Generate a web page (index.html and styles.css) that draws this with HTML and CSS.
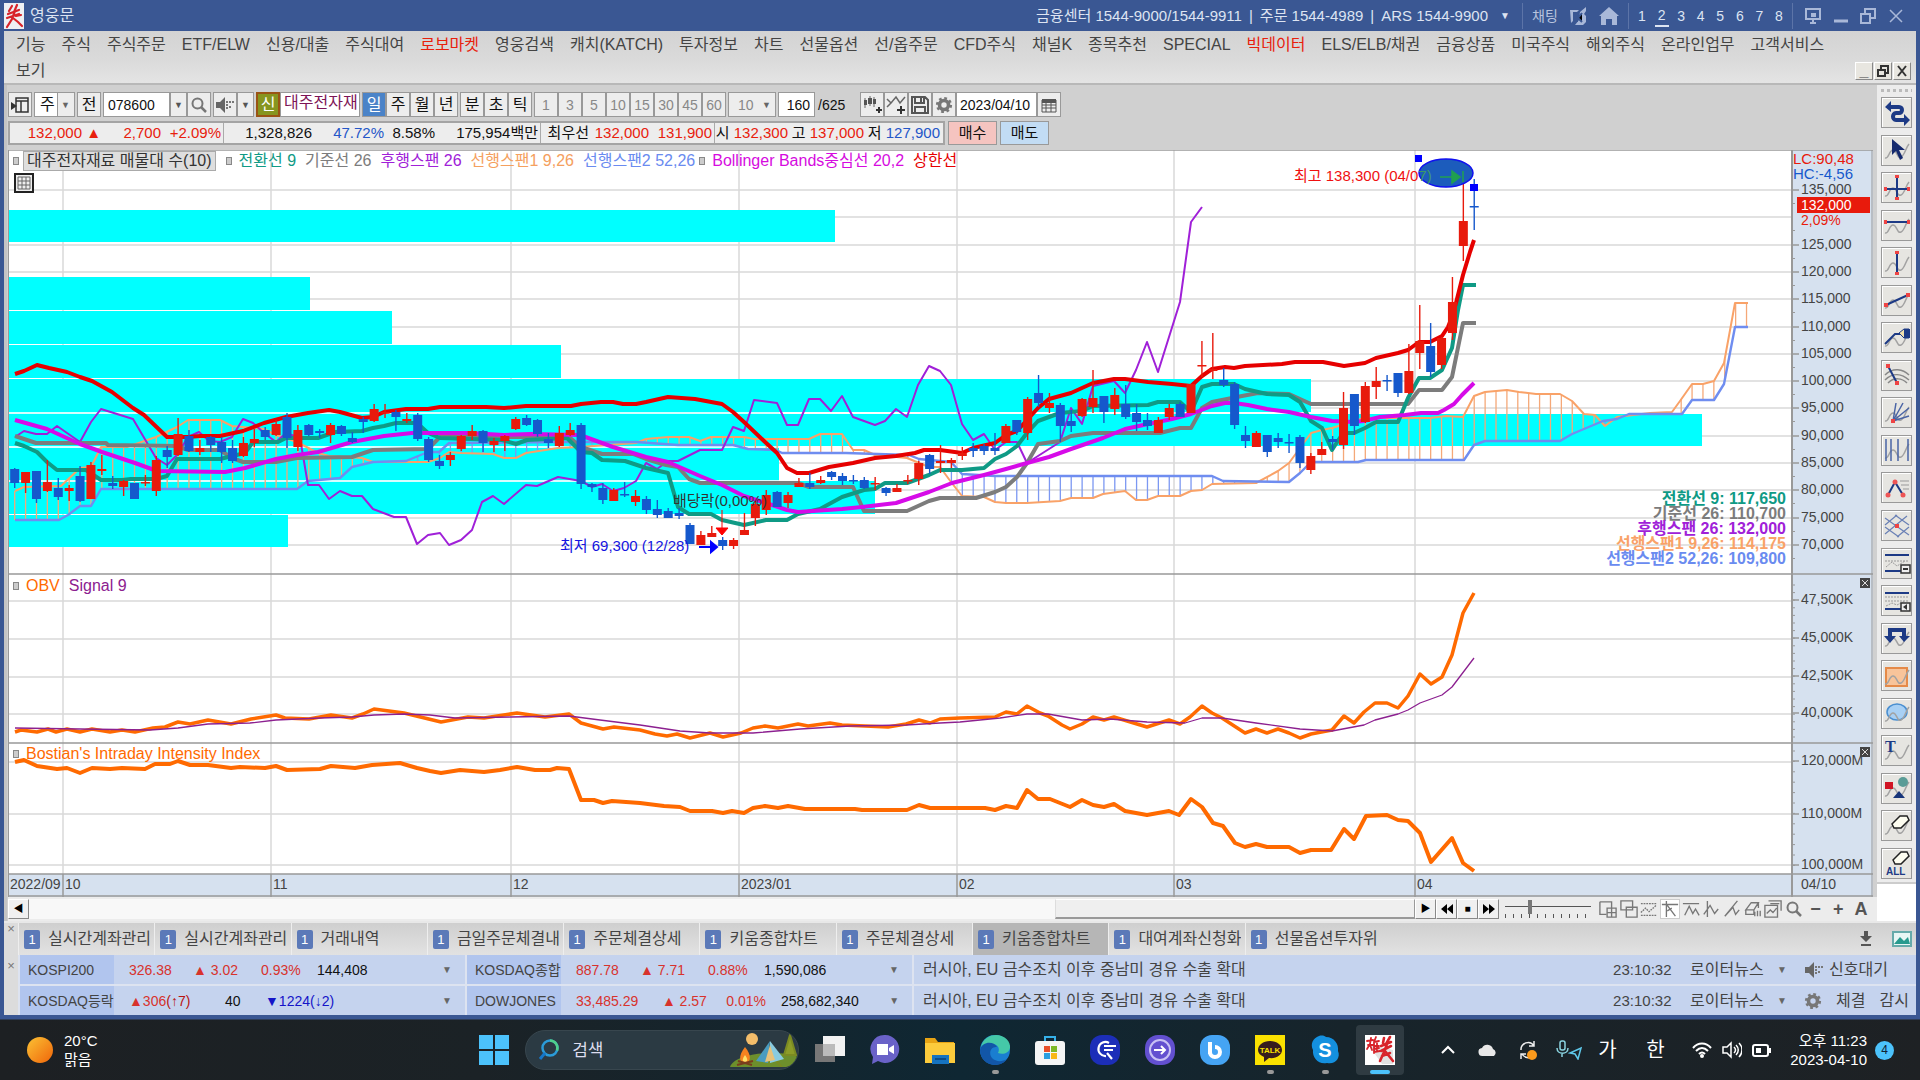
FILE: index.html
```html
<!DOCTYPE html>
<html lang="ko">
<head>
<meta charset="utf-8">
<title>영웅문</title>
<link rel="stylesheet" href="styles.css">
</head>
<body>
<svg class="defs" aria-hidden="true">
  <symbol id="wave" viewBox="0 0 28 28"><path d="M2 22c4 1 4-8 8-8s4 9 8 7 4-8 8-13" fill="none" stroke="#a2a2a2" stroke-width="1.5"/></symbol>
  <symbol id="speaker" viewBox="0 0 20 16"><path d="M1 5h4l5-5v16l-5-5H1z" fill="#666"/><path d="M12 4v9M15 4v3M15 9v3M18 4v2" stroke="#777" stroke-width="2" stroke-dasharray="2 1"/></symbol>
  <symbol id="gear" viewBox="0 0 20 20"><circle cx="10" cy="10" r="5" fill="none" stroke="#777" stroke-width="4"/><circle cx="10" cy="10" r="7.5" fill="none" stroke="#777" stroke-width="3" stroke-dasharray="3 2.9"/></symbol>
  <symbol id="lens" viewBox="0 0 18 18"><circle cx="7.500" cy="7.500" r="5" fill="none" stroke="#777" stroke-width="2"/><path d="M11 11l5 5" stroke="#777" stroke-width="2.500"/></symbol>
</svg>

<div class="window">
  <header class="titlebar">
    <svg class="logo" viewBox="0 0 20 26"><rect width="20" height="26" fill="#eef0f4"/><path d="M8 3L5 8M13 2l-3 7M4 11l11-4M3 15l12-4M11 8l-3 8-5 8M9 15l5 4 4 4M12 13l5-1" fill="none" stroke="#d8232a" stroke-width="2.200" stroke-linecap="round"/></svg>
    <h1>영웅문</h1>
    <div class="phones"><span>금융센터 1544-9000/1544-9911</span><span>|</span><span>주문 1544-4989</span><span>|</span><span>ARS 1544-9900</span></div>
    <button class="drop" aria-label="전화번호">▼</button>
    <div class="tgroup links">
      <button>채팅</button>
      <button aria-label="키움"><svg width="20" height="20" viewBox="0 0 20 20"><path d="M2 4h9l-2 2H5v9l-2 2zM12 6l6-5v4l-2 3 2 2v6l-3 3H7l4-5z" fill="#a9b8d8"/><path d="M9 8v8M14 7l-4 5 4 4" stroke="#3a5793" stroke-width="2"/></svg></button>
      <button aria-label="홈"><svg width="20" height="20" viewBox="0 0 20 20"><path d="M0 10L10 1l10 9h-2v9h-5v-6H7v6H2v-9z" fill="#a9b8d8"/></svg></button>
    </div>
    <nav class="tgroup nums" aria-label="화면"><button>1</button><button class="on">2</button><button>3</button><button>4</button><button>5</button><button>6</button><button>7</button><button>8</button></nav>
    <div class="tgroup wins">
      <button aria-label="모니터"><svg width="16" height="16" viewBox="0 0 16 16"><path d="M1 1h14v10H1zM5 15h6M8 11v4" fill="none" stroke="#a9b8d8" stroke-width="2"/><path d="M6 5h5v4H6z" fill="#a9b8d8"/></svg></button>
      <button aria-label="최소화"><svg width="16" height="16" viewBox="0 0 16 16"><path d="M1 13h14" stroke="#a9b8d8" stroke-width="3"/></svg></button>
      <button aria-label="복원"><svg width="16" height="16" viewBox="0 0 16 16"><path d="M1 6h9v9H1zM5 6V1h10v9h-5" fill="none" stroke="#a9b8d8" stroke-width="2"/></svg></button>
      <button aria-label="닫기"><svg width="16" height="16" viewBox="0 0 16 16"><path d="M2 2l12 12M14 2L2 14" stroke="#a9b8d8" stroke-width="1.500"/></svg></button>
    </div>
  </header>

  <nav class="menu">
    <a href="#">기능</a><a href="#">주식</a><a href="#">주식주문</a><a href="#">ETF/ELW</a><a href="#">신용/대출</a><a href="#">주식대여</a><a href="#" class="hot">로보마켓</a><a href="#">영웅검색</a><a href="#">캐치(KATCH)</a><a href="#">투자정보</a><a href="#">차트</a><a href="#">선물옵션</a><a href="#">선/옵주문</a><a href="#">CFD주식</a><a href="#">채널K</a><a href="#">종목추천</a><a href="#">SPECIAL</a><a href="#" class="hot">빅데이터</a><a href="#">ELS/ELB/채권</a><a href="#">금융상품</a><a href="#">미국주식</a><a href="#">해외주식</a><a href="#">온라인업무</a><a href="#">고객서비스</a>
  </nav>
  <div class="menu second">
    <a href="#">보기</a>
    <div class="childwins"><button aria-label="최소화">_</button><button aria-label="복원"><svg width="12" height="12" viewBox="0 0 12 12"><path d="M1 5h7v6H1zM4 4V1h7v7H8" fill="none" stroke="#333" stroke-width="2"/></svg></button><button aria-label="닫기"><svg width="12" height="12" viewBox="0 0 12 12"><path d="M2 1l8 10M10 1L2 11" stroke="#333" stroke-width="2"/></svg></button></div>
  </div>

  <div class="workspace">
    <main class="left">
      <div class="toolbar">
        <button class="sq" aria-label="패널"><svg width="18" height="16" viewBox="0 0 18 16"><path d="M5 1h12v14H5zM5 4h12M10 4v11" fill="none" stroke="#333" stroke-width="1.500"/><path d="M0 5l6 4-6 4z" fill="#333"/></svg></button>
        <span class="pick"><select aria-label="종류"><option>주</option></select></span>
        <button class="sq">전</button>
        <span class="joined code"><input type="text" value="078600" aria-label="종목코드"><button class="thin" aria-label="목록">▼</button><button class="sq" aria-label="검색"><svg width="18" height="18"><use href="#lens"/></svg></button></span>
        <span class="joined"><button class="sq" aria-label="소리"><svg width="20" height="16"><use href="#speaker"/></svg></button><button class="thin" aria-label="소리 설정">▼</button></span>
        <span class="joined"><button class="sq credit">신</button><span class="stock">대주전자재</span></span>
        <span class="joined"><button class="sq on">일</button><button class="sq">주</button><button class="sq">월</button><button class="sq">년</button></span>
        <span class="joined"><button class="sq">분</button><button class="sq">초</button><button class="sq">틱</button></span>
        <span class="joined mins"><button class="sq">1</button><button class="sq">3</button><button class="sq">5</button><button class="sq">10</button><button class="sq">15</button><button class="sq">30</button><button class="sq">45</button><button class="sq">60</button></span>
        <span class="pick wide"><select aria-label="주기"><option>10</option></select></span>
        <span class="joined count"><input type="text" value="160" aria-label="봉 개수"><span>/625</span></span>
        <span class="joined">
          <button class="sq" aria-label="차트 유형"><svg width="20" height="20" viewBox="0 0 20 20"><path d="M3 3v10M8 1v10M12 2v10" stroke="#666"/><path d="M2 5h3v5H2zM6 3h4v6H6zM11 4h3v5h-3z" fill="#555"/><path d="M14 15h6M17 12v6" stroke="#333" stroke-width="2"/></svg></button>
          <button class="sq" aria-label="지표 추가"><svg width="20" height="20" viewBox="0 0 20 20"><path d="M1 4l4 4 5-6 4 6 5-6M1 12l5-5" fill="none" stroke="#666" stroke-width="1.500"/><path d="M11 15h8M15 11v8" stroke="#333" stroke-width="2"/></svg></button>
          <button class="sq" aria-label="저장"><svg width="18" height="18" viewBox="0 0 18 18"><path d="M1 1h13l3 3v13H1zM4 1v6h9V1M4 17v-6h10v6M10 2v4" fill="none" stroke="#555" stroke-width="2"/></svg></button>
          <button class="sq" aria-label="설정"><svg width="18" height="18"><use href="#gear"/></svg></button>
          <input class="date" type="text" value="2023/04/10" aria-label="날짜"><button class="sq" aria-label="달력"><svg width="16" height="16" viewBox="0 0 16 16"><path d="M1 3h14v12H1zM1 8h14M1 11h14M5 6v9M10 6v9" fill="none" stroke="#555"/><path d="M1 2h14v4H1z" fill="#555"/></svg></button>
        </span>
      </div>

      <div class="quotes">
        <div class="quote">
          <span class="up">132,000 ▲</span><span class="up">2,700</span><span class="up cut">+2.09%</span><span>1,328,826</span><span class="down">47.72%</span><span>8.58%</span><span class="cut">175,954백만</span><span>최우선</span><span class="up">132,000</span><span class="up cut">131,900</span><span>시 <b class="up">132,300</b></span><span>고 <b class="up">137,000</b></span><span>저 <b class="down">127,900</b></span>
        </div>
        <button class="buy">매수</button><button class="sell">매도</button>
      </div>

      <section class="chart" aria-label="대주전자재료 일봉 차트">
        <svg id="plot" viewBox="8 150 1865 747"></svg>
        <div class="legend main">
          <i></i><span class="boxed">대주전자재료 매물대 수(10)</span><i></i><span class="c-green">전환선 9</span><span class="c-grey">기준선 26</span><span class="c-purple">후행스팬 26</span><span class="c-sand">선행스팬1 9,26</span><span class="c-blue">선행스팬2 52,26</span><i></i><span class="c-mag">Bollinger Bands중심선 20,2</span><span class="c-red">상한선</span>
        </div>
        <button class="gridbtn" aria-label="표"><svg width="14" height="14" viewBox="0 0 14 14"><path d="M1 1h12v12H1zM1 5h12M1 9h12M5 1v12M9 1v12" fill="none" stroke="#666"/></svg></button>
        <div class="legend obv"><i></i><span class="c-orange">OBV</span><span class="c-sig">Signal 9</span></div>
        <div class="legend bii"><i></i><span class="c-orange">Bostian's Intraday Intensity Index</span></div>
      </section>

      <div class="scroll">
        <button aria-label="왼쪽">◀</button>
        <div class="track"><div class="thumb"></div></div>
        <button aria-label="오른쪽">▶</button><button aria-label="뒤로"><svg width="12" height="10"><path d="M6 0v10L0 5zM12 0v10L6 5z"/></svg></button><button aria-label="정지">■</button><button aria-label="앞으로"><svg width="12" height="10"><path d="M0 0v10l6-5zM6 0v10l6-5z"/></svg></button>
        <input type="range" min="0" max="100" value="28" aria-label="배율">
        <div class="minis">
          <svg viewBox="0 0 20 20"><path d="M1 2h13v7M1 2v14h7M9 9h10v10H9zM9 14h10M14 9v10"/></svg>
          <svg viewBox="0 0 20 20"><path d="M1 1h13v10H1zM7 8h12v11H7z"/></svg>
          <svg viewBox="0 0 20 20"><path d="M1 4h18M1 17h18M1 14l5-5 4 4 8-7" stroke-dasharray="2 1"/></svg>
          <svg class="on" viewBox="0 0 20 20"><path d="M1 5h18M6 1v18M7 6l9 12M7 12l5-3"/></svg>
          <svg viewBox="0 0 20 20"><path d="M1 4h18M3 17l5-10 4 8 3-5 4 7"/></svg>
          <svg viewBox="0 0 20 20"><path d="M6 1v18M2 16l7-10 5 9 4-5"/></svg>
          <svg viewBox="0 0 20 20"><path d="M2 18L16 1M3 17l8-9 3 8 4-5"/></svg>
          <svg viewBox="0 0 20 20"><path d="M2 11l6-8h8l-5 8zM2 11v5h9v-5M16 3v6M12 18v-5M15 12v6M18 12v6"/></svg>
          <svg viewBox="0 0 20 20"><path d="M5 1h14v11M1 6h14v13H1zM3 15l4-4 3 3 4-5M7 4h10"/></svg>
          <svg viewBox="0 0 18 18"><use href="#lens"/></svg>
          <b>−</b><b>+</b><b>A</b>
        </div>
      </div>
    </main>

    <aside class="side" aria-label="작도 도구">
      <div class="grip"></div>
      <div class="tools">
        <button aria-label="전환"><svg viewBox="0 0 28 28"><path d="M24 21H13c-4 0-4-7 0-7h3c4 0 4-6 0-6H6" fill="none" stroke="#1d3a85" stroke-width="4"/><path d="M8 2v11L2 8zM21 15v12l6-6z" fill="#1d3a85"/></svg></button>
        <button aria-label="선택"><svg viewBox="0 0 28 28"><use href="#wave"/><path d="M9 3v16l4-4 4 9 3-2-4-8h6z" fill="#152a6e"/></svg></button>
        <button aria-label="십자선"><svg viewBox="0 0 28 28"><use href="#wave"/><path d="M2 15h24M14 3v22" stroke="#1d3a85" stroke-width="2"/><path d="M1 13h3v4H1zM24 13h3v4h-3zM12 1h4v3h-4zM12 23h4v3h-4z" fill="#e44"/></svg></button>
        <button aria-label="수평선"><svg viewBox="0 0 28 28"><use href="#wave"/><path d="M2 11h24" stroke="#1d3a85" stroke-width="2"/><path d="M1 9h3v4H1zM24 9h3v4h-3z" fill="#e44"/></svg></button>
        <button aria-label="수직선"><svg viewBox="0 0 28 28"><use href="#wave"/><path d="M14 4v20" stroke="#1d3a85" stroke-width="2"/><path d="M12 2h4v3h-4zM12 23h4v3h-4z" fill="#e44"/></svg></button>
        <button aria-label="추세선"><svg viewBox="0 0 28 28"><use href="#wave"/><path d="M3 19L25 9" stroke="#1d3a85" stroke-width="2"/><path d="M1 17h4v4H1zM23 7h4v4h-4z" fill="#e44"/></svg></button>
        <button aria-label="자유선"><svg viewBox="0 0 28 28"><use href="#wave"/><path d="M2 20l10-10h6" fill="none" stroke="#1d3a85" stroke-width="2"/><path d="M16 9l5-4h5v9h-5z" fill="#f0dfae" stroke="#1d3a85"/><path d="M21 5h6v9h-6z" fill="#1d3a85"/></svg></button>
        <button aria-label="부채호"><svg viewBox="0 0 28 28"><path d="M2 14c8-8 18-6 24 0M2 19c8-8 17-6 24 0M5 22c6-6 14-5 19 0" fill="none" stroke="#888" stroke-width="1.500"/><path d="M5 5l9 17" stroke="#1d3a85" stroke-width="2"/><path d="M3 3h4v4H3zM12 20h4v4h-4z" fill="#e44"/></svg></button>
        <button aria-label="각도선"><svg viewBox="0 0 28 28"><use href="#wave"/><path d="M10 22L13 4M10 22L20 4M10 22L26 9M10 22l16-5" stroke="#4a64a5" stroke-width="1.500"/><path d="M8 20h4v4H8z" fill="#e44"/></svg></button>
        <button aria-label="시간대"><svg viewBox="0 0 28 28"><use href="#wave"/><path d="M3 3v22M8 3v22M15 3v22M25 3v22" stroke="#4a64a5" stroke-width="1.500"/></svg></button>
        <button aria-label="패턴"><svg viewBox="0 0 28 28"><path d="M5 21l7-13 8 13" fill="none" stroke="#1d3a85" stroke-width="2"/><path d="M17 7h9M18 11h8M20 15h6" stroke="#999"/><circle cx="5" cy="21" r="2.500" fill="#e55"/><circle cx="12" cy="8" r="2.500" fill="#e55"/><circle cx="20" cy="21" r="2.500" fill="#e55"/></svg></button>
        <button aria-label="격자"><svg viewBox="0 0 28 28"><path d="M2 6l24 17M2 15l14 10M12 3l14 10M2 22L24 4M2 13L14 3M14 25l12-10" stroke="#6a80b5" stroke-width="1.200"/><path d="M12 12h4v4h-4z" fill="#e44"/></svg></button>
        <button aria-label="채널"><svg viewBox="0 0 28 28"><path d="M2 6h24M2 22h24" stroke="#1d3a85" stroke-width="2"/><path d="M2 12h24M3 18l6-5 5 4 8-5" stroke="#999" fill="none" stroke-dasharray="2 1"/><path d="M18 16h9v8h-9z" fill="#eee" stroke="#333" stroke-width="1.500"/><path d="M20 20h5" stroke="#333" stroke-width="2"/></svg></button>
        <button aria-label="채널 이동"><svg viewBox="0 0 28 28"><path d="M2 6h24M2 22h24" stroke="#1d3a85" stroke-width="2"/><path d="M2 10h24M2 14h24M3 19l6-3 5 2 8-4" stroke="#999" fill="none" stroke-dasharray="2 1"/><path d="M18 16h9v8h-9z" fill="#eee" stroke="#333" stroke-width="1.500"/><path d="M24 17v6l-4-3z" fill="#333"/></svg></button>
        <button aria-label="되돌림"><svg viewBox="0 0 28 28"><use href="#wave"/><path d="M7 14V6h14v8" fill="none" stroke="#1d3a85" stroke-width="4"/><path d="M1 12h12l-6 7zM16 12h11l-6 6z" fill="#1d3a85"/></svg></button>
        <button aria-label="사각형"><svg viewBox="0 0 28 28"><path d="M3 6h21v18H3z" fill="#f8c49a" stroke="#e58a48" stroke-width="2"/><use href="#wave"/></svg></button>
        <button aria-label="타원"><svg viewBox="0 0 28 28"><ellipse cx="14" cy="13" rx="10" ry="8" fill="#a8d0f4" stroke="#4a8fd0" stroke-width="1.500"/><use href="#wave"/></svg></button>
        <button aria-label="글자"><svg viewBox="0 0 28 28"><use href="#wave"/><text x="2" y="15" font-family="Liberation Serif, serif" font-weight="700" font-size="16" fill="#1d3a85">T</text></svg></button>
        <button aria-label="도형"><svg viewBox="0 0 28 28"><use href="#wave"/><path d="M2 8h8v7H2z" fill="#d11525"/><ellipse cx="20" cy="8" rx="5" ry="5" fill="#5a9c97"/><path d="M10 24l6-7 6 7z" fill="#17357a"/></svg></button>
        <button aria-label="지우기"><svg viewBox="0 0 28 28"><use href="#wave"/><path d="M9 12l8-8h7l2 4-8 8h-7z" fill="#fdfdf0" stroke="#222" stroke-width="1.500"/></svg></button>
        <button aria-label="모두 지우기"><svg viewBox="0 0 28 28"><path d="M10 11l8-8h6l2 4-8 8h-6z" fill="#fdfdf0" stroke="#222" stroke-width="1.500"/><text x="3" y="26" font-family="Liberation Sans, sans-serif" font-weight="700" font-size="10" fill="#1d3a85">ALL</text></svg></button>
      </div>
    </aside>
  </div>

  <div class="dock">
    <div class="handle">×</div>
    <nav class="tabs">
      <button><em>1</em><span>실시간계좌관리</span></button><button><em>1</em><span>실시간계좌관리</span></button><button><em>1</em><span>거래내역</span></button><button><em>1</em><span>금일주문체결내</span></button><button><em>1</em><span>주문체결상세</span></button><button><em>1</em><span>키움종합차트</span></button><button><em>1</em><span>주문체결상세</span></button><button class="on"><em>1</em><span>키움종합차트</span></button><button><em>1</em><span>대여계좌신청화</span></button><button><em>1</em><span>선물옵션투자위</span></button>
    </nav>
    <svg class="dl" width="12" height="16" viewBox="0 0 12 16"><path d="M4 0h4v5h4l-6 6-6-6h4zM1 13h10v2H1z" fill="#555"/></svg>
    <svg width="20" height="16" viewBox="0 0 20 16"><path d="M1 1h18v14H1z" fill="#e8f6f4" stroke="#6aa" stroke-width="2"/><path d="M2 13l6-7 4 4 4-4 2 7z" fill="#289a8e"/></svg>
  </div>
  <div class="tick">
    <div class="handle">×</div>
    <div class="rows">
      <div class="row">
        <div class="name">KOSPI200</div><div class="vals"><span class="v1 up2">326.38</span><span class="v2 up2">▲ 3.02</span><span class="v3 up2">0.93%</span><span class="v4">144,408</span><button aria-label="지수 선택">▼</button></div>
        <div class="name">KOSDAQ종합</div><div class="vals"><span class="v1 up2">887.78</span><span class="v2 up2">▲ 7.71</span><span class="v3 up2">0.88%</span><span class="v4">1,590,086</span><button aria-label="지수 선택">▼</button></div>
        <div class="news"><a href="#">러시아, EU 금수조치 이후 중남미 경유 수출 확대</a><time>23:10:32</time><span>로이터뉴스</span><button aria-label="뉴스 선택">▼</button></div>
        <div class="end"><svg width="20" height="16"><use href="#speaker"/></svg><button>신호대기</button></div>
      </div>
      <div class="row">
        <div class="name">KOSDAQ등락</div><div class="vals"><span class="w1 up2">▲306<b class="dk">(↑7)</b></span><span class="w2">40</span><span class="w3">▼1224(↓2)</span><button aria-label="지수 선택">▼</button></div>
        <div class="name">DOWJONES</div><div class="vals"><span class="v1 up2">33,485.29</span><span class="v2 up2 far">▲ 2.57</span><span class="v3 up2">0.01%</span><span class="v4">258,682,340</span><button aria-label="지수 선택">▼</button></div>
        <div class="news"><a href="#">러시아, EU 금수조치 이후 중남미 경유 수출 확대</a><time>23:10:32</time><span>로이터뉴스</span><button aria-label="뉴스 선택">▼</button></div>
        <div class="end two"><svg width="18" height="18"><use href="#gear"/></svg><button>체결</button><button>감시</button></div>
      </div>
    </div>
  </div>
</div>

<footer class="taskbar">
  <div class="weather"><svg width="26" height="26" viewBox="0 0 26 26"><defs><linearGradient id="sun" x1="0" y1="0" x2="1" y2="1"><stop offset="0" stop-color="#fbc234"/><stop offset="1" stop-color="#f0650a"/></linearGradient></defs><circle cx="13" cy="13" r="13" fill="url(#sun)"/></svg><p>20°C<br>맑음</p></div>
  <div class="apps">
    <button class="app win" aria-label="시작"><svg viewBox="0 0 30 30"><path d="M0 0h14v14H0zM16 0h14v14H16zM0 16h14v14H0zM16 16h14v14H16z" fill="#4cc2fb"/></svg></button>
    <label class="search"><svg width="22" height="22" viewBox="0 0 22 22"><circle cx="12" cy="9" r="7.500" fill="none" stroke="#2b9bd8" stroke-width="2.500"/><path d="M12 1.500a7.500 7.500 0 0 1 7 10" fill="none" stroke="#4fd08c" stroke-width="2.500"/><path d="M7 14l-5 6" stroke="#1677c8" stroke-width="3"/></svg><input type="text" placeholder="검색" aria-label="검색"><svg width="68" height="34" viewBox="0 0 68 34"><path d="M0 34c4-14 50-18 68-10-3 6-6 9-12 10z" fill="#6d8f2c"/><path d="M42 24l10 10M60 2l-6 20h12z" stroke="#7b8a22" fill="#8d9c28" stroke-width="2"/><circle cx="22" cy="6" r="6" fill="#f4bd6a"/><path d="M40 8L26 28l12 2z" fill="#4a9cc0"/><path d="M40 8l14 18-14 4z" fill="#89cbe0"/><path d="M40 12l-5 17 10-2z" fill="#e8c27a"/><path d="M15 14c7 8 6 16 0 16s-7-7 0-16z" fill="#f58220"/><path d="M15 22c3 4 3 7 0 7s-3-3 0-7z" fill="#fde06a"/><path d="M7 32l16-4M8 28l14 4" stroke="#7a3d1c" stroke-width="2"/></svg></label>
    <button class="app" aria-label="작업 보기"><svg viewBox="0 0 32 32"><path d="M1 10h20v18H1z" fill="#777"/><path d="M9 2h22v20H9z" fill="#f2f2f2"/><path d="M9 10h12v12H9z" fill="#bbb"/></svg></button>
    <button class="app" aria-label="채팅"><svg viewBox="0 0 32 32"><path d="M16 1a14 14 0 1 1-7 26l-6 3 1-7A14 14 0 0 1 16 1z" fill="#6a62c8"/><path d="M8 10h11v11H8zM20 14l5-3v9l-5-3z" fill="#fff"/></svg></button>
    <button class="app" aria-label="탐색기"><svg viewBox="0 0 32 32"><path d="M1 4h10l3 4h16v8H1z" fill="#e8a414"/><path d="M1 9h30v20H1z" fill="#fccb3c"/><path d="M8 21h17v9H8z" fill="#1673c0"/><path d="M11 25h11" stroke="#0b4c88" stroke-width="2"/></svg></button>
    <button class="app run" aria-label="Edge"><svg viewBox="0 0 32 32"><circle cx="16" cy="16" r="15" fill="#1a7ed0"/><path d="M2 13C4 4 11 1 17 1c9 0 15 7 14 13-1 5-7 7-12 5 4-8-6-13-17-6z" fill="#45c8a8"/><path d="M1 16c2-9 14-9 17-3-6-1-9 6-5 11 4 4 10 4 15 1-8 11-27 6-27-9z" fill="#1256a8"/></svg></button>
    <button class="app" aria-label="스토어"><svg viewBox="0 0 32 32"><path d="M11 8V3h10v5" fill="none" stroke="#35b0e8" stroke-width="2"/><rect x="1" y="7" width="30" height="24" rx="3" fill="#f5f5f5"/><path d="M10 12h6v6h-6z" fill="#e8502a"/><path d="M17 12h6v6h-6z" fill="#7db928"/><path d="M10 19h6v6h-6z" fill="#2b9fe0"/><path d="M17 19h6v6h-6z" fill="#f8b818"/></svg></button>
    <button class="app" aria-label="검색 도구"><svg viewBox="0 0 32 32"><rect x="1" y="1" width="30" height="30" rx="12" fill="#1c2eb8"/><path d="M20 9a7 7 0 1 0-3 13M15 12h12M15 16h9M18 19l5 6" fill="none" stroke="#fff" stroke-width="2.200"/></svg></button>
    <button class="app" aria-label="이동"><svg viewBox="0 0 32 32"><rect x="1" y="1" width="30" height="30" rx="13" fill="#6350d0"/><circle cx="16" cy="16" r="10" fill="none" stroke="#c9c2f4" stroke-width="2"/><path d="M10 16h11M17 12l4 4-4 4" fill="none" stroke="#fff" stroke-width="2"/></svg></button>
    <button class="app" aria-label="브라우저"><svg viewBox="0 0 32 32"><rect x="1" y="1" width="30" height="30" rx="12" fill="#45a4f4"/><path d="M11 8v12M11 18a5 5 0 1 0 5-5" fill="none" stroke="#fff" stroke-width="4"/></svg></button>
    <button class="app run" aria-label="카카오톡"><svg viewBox="0 0 32 32"><path d="M1 1h30v30H1z" fill="#fae100"/><path d="M16 7c7 0 12 4 12 9s-6 9-13 8l-5 4v-5c-4-2-6-4-6-7 0-5 5-9 12-9z" fill="#371d1e"/><text x="16" y="19" text-anchor="middle" font-family="Liberation Sans, sans-serif" font-weight="700" font-size="8" fill="#fae100">TALK</text></svg></button>
    <button class="app run" aria-label="스카이프"><svg viewBox="0 0 32 32"><path d="M10 2c3-1 6 0 7 1 8 0 13 7 12 14 3 7-3 14-11 12C10 31 3 24 4 16 1 10 4 4 10 2z" fill="#1490df"/><text x="16" y="23" text-anchor="middle" font-family="Liberation Sans, sans-serif" font-weight="700" font-size="20" fill="#fff">S</text></svg></button>
    <button class="app run active" aria-label="영웅문"><svg viewBox="0 0 32 32"><path d="M1 1h30v30H1z" fill="#fff"/><path d="M4 10l25 6v14H18z" fill="#e2e2e2"/><g fill="none" stroke="#d8232a" stroke-linecap="round"><path d="M3 7l6-1M7 4l-1 6-3 5M4 11h5M6 11l2 5M12 3l-2 5v11M10 8l5-1M10 12h5M10 15l5-1M10 18l6-1M13 8v9" stroke-width="1.800"/><path d="M20 4l-1 5M26 3l-4 7M17 12l10-4M17 17l10-5M23 10l-3 8-4 9M21 17l4 5 4 5M18 22l8-3" stroke-width="2.600"/></g></svg></button>
  </div>
  <div class="tray">
    <svg viewBox="0 0 20 20"><path d="M4 13l6-6 6 6" fill="none" stroke="#fff" stroke-width="2"/></svg>
    <svg viewBox="0 0 20 20"><path d="M5 16a4 4 0 0 1-1-8 6 6 0 0 1 11 1 4 4 0 0 1 1 7z" fill="#e8e8e8"/></svg>
    <svg viewBox="0 0 20 20"><path d="M3 10a7 7 0 0 1 13-4M16 1v5h-5M13 17a7 7 0 0 1-9-3M3 19v-5h5" fill="none" stroke="#eee" stroke-width="1.500"/><circle cx="14" cy="15" r="5" fill="#fb9a1c"/></svg>
    <svg class="mic" viewBox="0 0 26 20"><rect x="4" y="1" width="5" height="9" rx="2" fill="none" stroke="#8ad4e0" stroke-width="1.500"/><path d="M1 8c0 7 11 7 11 0M6 13v4" fill="none" stroke="#8ad4e0" stroke-width="1.500"/><path d="M25 8l-3 11-3-5-5-1z" fill="none" stroke="#5ec8ea" stroke-width="1.500"/></svg>
    <span>가</span><span class="han">한</span>
    <div class="net"><svg viewBox="0 0 20 20"><path d="M1 8c5-6 13-6 18 0M4 11c4-4 8-4 12 0M7 14c2-2 4-2 6 0" fill="none" stroke="#fff" stroke-width="2"/><circle cx="10" cy="16" r="2" fill="#fff"/></svg><svg viewBox="0 0 20 20"><path d="M1 7h4l4-4v14l-4-4H1zM12 7c2 2 2 4 0 6M14 5c3 3 3 7 0 10M17 3c4 4 4 10 0 14" fill="none" stroke="#fff" stroke-width="1.500"/></svg><svg viewBox="0 0 20 20"><rect x="1" y="5" width="15" height="11" rx="2" fill="none" stroke="#fff" stroke-width="2"/><path d="M4 8h5v5H4zM17 8h2v5h-2z" fill="#fff"/></svg></div>
    <p>오후 11:23<br>2023-04-10</p><em>4</em>
  </div>
</footer>
<script src="chart.js"></script>
</body>
</html>
```
FILE: styles.css
```css
* { box-sizing: border-box; }
body { margin: 0; min-height: 100vh; display: flex; flex-direction: column; background: #1c2024; font: 16px/20px "Liberation Sans", "Noto Sans CJK KR", sans-serif; color: #444; }
button, input, select { font: inherit; color: inherit; margin: 0; padding: 0; border: 0; background: none; border-radius: 0; }
a { color: inherit; text-decoration: none; }
b, em { font-weight: 400; font-style: normal; }
p { margin: 0; }
svg { flex: none; display: block; }
.defs { position: absolute; width: 0; height: 0; }
.window { background: #3a5793; padding: 0 4px 4px; display: flex; flex-direction: column; }

.titlebar { height: 31px; display: flex; align-items: center; color: #dde4f2; font-size: 15px; white-space: nowrap; }
.logo { width: 20px; height: 26px; margin-right: 6px; }
.titlebar h1 { font-size: 16px; font-weight: 400; margin: 0 auto 0 0; }
.drop { font-size: 10px; width: 34px; }
.phones { display: flex; gap: 7px; }
.tgroup { display: flex; align-items: center; height: 26px; border-left: 1px solid #5c74a8; }
.tgroup button { display: flex; justify-content: center; }
.links { width: 106px; padding: 0 9px; justify-content: space-between; font-size: 14px; color: #b8c4de; }
.nums { width: 164px; padding: 0 6px; justify-content: space-between; font-size: 14px; }
.nums button { width: 14px; }
.nums .on { border-bottom: 2px solid #dde4f2; }
.wins { width: 124px; padding: 0 12px; justify-content: space-between; }

.menu { display: flex; align-items: center; gap: 16px; height: 28px; padding: 0 12px; background: linear-gradient(#d3d3d3, #dadada); white-space: nowrap; }
.menu.second { height: 26px; padding-right: 5px; background: linear-gradient(#dadada, #e4e4e4); border-bottom: 2px solid #b8b8b8; justify-content: space-between; }
.hot { color: #e8200c; }
.childwins { display: flex; gap: 1px; }
.childwins button { width: 18px; height: 18px; background: #e8e6e0; border: 1px solid #888; border-top-color: #fff; border-left-color: #fff; display: flex; align-items: center; justify-content: center; font-weight: 700; line-height: 10px; }

.workspace { display: flex; background: #fff; }
.left { flex: 1; min-width: 0; background: #d0d0d0; border-left: 3px solid #c4c4c4; padding: 0 4px 0 1px; }
.toolbar { display: flex; align-items: center; gap: 2px; padding-top: 6px; height: 33px; color: #111; }
.sq, .thin, .pick, .toolbar input, .stock { height: 25px; border: 1px solid #999; background: #ededed; }
.sq { width: 24px; display: flex; align-items: center; justify-content: center; overflow: hidden; flex: none; line-height: 22px; }
.thin { width: 17px; font-size: 9px; color: #555; }
.joined { display: flex; align-items: center; }
.pick { position: relative; width: 41px; }
.pick select { appearance: none; width: 100%; height: 100%; padding-left: 5px; background: linear-gradient(90deg, #fff 22px, #999 22px, #999 23px, #ededed 23px); }
.pick::after { content: "▼"; position: absolute; right: 4px; top: 2px; font-size: 9px; color: #666; pointer-events: none; }
.pick.wide { width: 48px; font-size: 14px; color: #888; }
.pick.wide select { padding-left: 9px; background: #ededed; }
.toolbar input { background: #fff; font-size: 14px; padding: 0 4px; }
.code input { width: 67px; }
.sq.credit { background: #87951f; border: 2px solid #9a5414; color: #fff; }
.stock { width: 80px; background: #fff; color: #7d1456; white-space: nowrap; overflow: hidden; padding-left: 3px; }
.sq.on { background: #4a83c8; color: #fff; }
.mins { font-size: 14px; color: #888; }
.count input { width: 37px; text-align: right; }
.count { font-size: 14px; gap: 3px; width: 80px; }
.toolbar .date { width: 81px; padding: 0 3px; }

.quotes { display: flex; gap: 3px; padding: 3px 0 5px; height: 32px; font-size: 15px; color: #111; }
.quote { width: 937px; border: 2px solid #a4a4a4; background: #ededed; display: grid; grid-template-columns: 91px 60px 63px 88px 72px 51px 106px 48px 60px 66px 73px 76px 76px; text-align: right; line-height: 20px; white-space: nowrap; }
.cut { border-right: 1px solid #aaa; padding-right: 2px; }
.up { color: #e8200c; }
.down { color: #2456c8; }
.buy, .sell { width: 49px; border: 1px solid #999; background: #f5c4c0; }
.sell { background: #c2dcf4; }

.chart { position: relative; background: #fff; }
.chart > svg { width: 100%; height: auto; }
.legend { position: absolute; left: 5px; display: flex; align-items: center; gap: 9px; line-height: 20px; white-space: nowrap; }
.legend i { width: 6px; height: 8px; border: 1px solid #888; background: #ccc; margin-right: -2px; }
.legend .c-blue + i { margin-left: -5px; }
.legend .boxed { background: #dedede; outline: 1px solid #aaa; margin: 0 2px 0 -2px; padding: 0 3px; line-height: 18px; color: #333; }
.legend.main { top: 1px; }
.legend.obv { top: 57%; }
.legend.bii { top: 79%; margin-top: 4px; }
.gridbtn { position: absolute; left: 6px; top: 23px; width: 20px; height: 20px; border: 2px solid #222; background: #eee; display: flex; align-items: center; justify-content: center; }
.c-green { color: #0f9a85; } .c-grey { color: #7c7c7c; } .c-purple { color: #a020d8; } .c-sand { color: #f5a05e; } .c-blue { color: #6a8bf0; } .c-mag { color: #d60be0; } .c-red { color: #e60000; } .c-orange { color: #ff6a00; } .c-sig { color: #8c2090; }

.scroll { display: flex; align-items: center; height: 24px; background: #ececec; margin-right: -4px; padding-right: 4px; }
.scroll button { width: 21px; height: 20px; border: 1px solid #888; border-top-color: #fff; border-left-color: #fff; background: #f0f0f0; font-size: 10px; color: #000; display: flex; align-items: center; justify-content: center; line-height: 10px; }
.track { flex: 1; display: flex; justify-content: flex-end; background: #f8f8f8; height: 20px; }
.thumb { width: 26%; background: #efefef; border: 1px solid #999; border-top-color: #fff; border-left-color: #ddd; border-bottom-width: 2px; }
.scroll input { appearance: none; width: 86px; height: 20px; margin: 0 8px 0 6px; background: linear-gradient(#555, #555) 0 7px / 100% 1px no-repeat, repeating-linear-gradient(90deg, #555 0 1px, transparent 1px 8px) 0 15px / 100% 4px no-repeat; }
.scroll input::-webkit-slider-thumb { appearance: none; width: 4px; height: 14px; background: #777; margin-top: -4px; }
.minis { display: flex; align-items: center; gap: 2px; padding-right: 2px; width: 274px; justify-content: space-between; }
.minis svg { width: 18px; height: 18px; fill: none; stroke: #777; stroke-width: 1.5; }
.minis .on { background: #fff; outline: 1px solid #ccc; }
.minis b { font-weight: 700; font-size: 18px; color: #555; width: 20px; text-align: center; }

.side { width: 39px; display: flex; flex-direction: column; background: #ececec; margin-bottom: 37px; border-bottom: 2px solid #ccc; }
.grip { height: 3px; margin: 4px 4px 0; background: repeating-linear-gradient(90deg, #bbb 0 3px, transparent 3px 6px); }
.tools { flex: 1; display: grid; grid-auto-rows: 1fr; align-items: center; padding: 2px 4px 0; }
.tools button { width: 31px; height: 31px; border: 1px solid #999; box-shadow: inset 1px 1px #fff; background: #e6e5e1; display: flex; align-items: center; justify-content: center; }
.tools svg { width: 28px; height: 28px; }

.dock { display: flex; align-items: center; height: 34px; background: linear-gradient(#cfcfcf, #e2e2e2); border-top: 2px solid #e8e8e8; padding-right: 4px; gap: 20px; }
.dock .dl { margin-left: auto; }
.handle { width: 14px; align-self: stretch; background: #dcdcdc; color: #777; font-size: 13px; line-height: 12px; text-align: center; flex: none; }
.dock .handle { margin-right: -20px; }
.tabs { display: flex; flex: 1; max-width: 1363px; align-self: stretch; }
.tabs button { flex: 1; min-width: 0; display: flex; align-items: center; gap: 8px; padding-left: 5px; border-left: 1px solid #eee; white-space: nowrap; overflow: hidden; }
.tabs .on { background: #b6b6b6; }
.tabs em { width: 16px; height: 19px; background: #5b79b8; border-radius: 2px; color: #fff; font-size: 13px; line-height: 19px; text-align: center; flex: none; }
.tabs span { overflow: hidden; }

.tick { display: flex; background: #c5d3ee; }
.tick .handle { padding-top: 5px; }
.rows { flex: 1; min-width: 0; font-size: 15px; line-height: 20px; }
.row { display: flex; align-items: stretch; height: 29px; white-space: nowrap; }
.row + .row { border-top: 2px solid #dde3f0; height: 31px; }
.row > div { display: flex; align-items: center; }
.row > .name { width: 96px; padding-left: 8px; background: #b1c5ee; border-left: 2px solid #dde3f0; font-size: 14px; }
.vals { width: 351px; padding: 0 12px 0 15px; color: #111; font-size: 14px; }
.vals button, .news button { font-size: 10px; color: #666; }
.vals button { margin-left: auto; width: 12px; }
.v1 { width: 64px; } .v2 { width: 68px; } .v3 { width: 56px; } .v4 { width: 110px; }
.v1:has(+ .far) { width: 88px; } .far { width: 66px; }
.w1 { width: 96px; } .w2 { width: 40px; } .w3 { color: #1414c8; }
.up2 { color: #d8322c; } .dk { color: #b81410; }
.news { flex: 1; border-left: 2px solid #dde3f0; padding-left: 9px; }
.news a { margin-right: auto; font-size: 16px; }
.news time { width: 77px; }
.news span { width: 87px; font-size: 16px; }
.end { width: 129px; padding-left: 17px; gap: 5px; font-size: 16px; }
.end.two { gap: 14px; }

.taskbar { flex: 1; min-height: 58px; display: flex; align-items: center; justify-content: space-between; background: linear-gradient(90deg, #1d2023 0, #1b2226 25%, #0f2733 50%, #17242b 70%, #1e2124 100%); color: #fff; font-size: 15px; line-height: 19px; border-top: 1px solid #2e3d58; }
.weather { display: flex; align-items: center; gap: 11px; padding-left: 27px; width: 436px; }
.apps { display: flex; align-items: center; gap: 7px; }
.app { width: 48px; height: 50px; border-radius: 4px; position: relative; display: flex; align-items: center; justify-content: center; }
.app svg { width: 32px; height: 32px; }
.app.win svg { width: 30px; height: 30px; }
.run::after { content: ""; position: absolute; bottom: 1px; width: 7px; height: 4px; border-radius: 2px; background: #999; }
.active { background: #2f3b42; }
.active::after { width: 20px; background: #4cc2fb; }
.search { display: flex; align-items: center; width: 274px; height: 40px; border-radius: 20px; background: #2b3a43; border: 1px solid #38464e; padding-left: 12px; gap: 12px; overflow: hidden; }
.search input { flex: 1; min-width: 0; font-size: 17px; }
.search input::placeholder { color: #dde; opacity: 1; }
.tray { display: flex; align-items: center; gap: 20px; padding-right: 26px; }
.tray svg { width: 20px; height: 20px; }
.tray .mic { width: 26px; margin: 0 -4px 0 -2px; }
.tray span { font-size: 20px; width: 20px; }
.tray .han { margin-left: 8px; }
.net { display: flex; gap: 10px; margin-left: 6px; margin-right: -2px; }
.tray p { text-align: right; white-space: nowrap; }
.tray em { width: 19px; height: 19px; border-radius: 10px; background: #4cc2fb; color: #123; font-size: 12px; text-align: center; margin-left: -12px; }

#plot text { font-size: 14px; fill: #444; }
#plot .note { font-size: 15px; }
#plot .big { font-size: 16px; font-weight: 700; text-anchor: end; }
#plot polyline { fill: none; stroke-linejoin: round; }
```
FILE: chart.js
```js
const svg = document.getElementById('plot');
const NS = 'http://www.w3.org/2000/svg';
function add(tag, attrs, text, parent = svg) {
  const el = document.createElementNS(NS, tag);
  for (const k in attrs) el.setAttribute(k, attrs[k]);
  if (text) el.textContent = text;
  parent.appendChild(el);
  return el;
}
const line = (x1, y1, x2, y2, c, w = 1) => add('path', { d: `M${x1} ${y1}L${x2} ${y2}`, stroke: c, 'stroke-width': w });
const rect = (x, y, w, h, fill) => add('rect', { x, y, width: w, height: h, fill });

const RED = '#e81a0c', BLUE = '#1558cc', GRID = '#d8d8d8';
const first = 14.7, step = 10.892;
const xAt = i => first + step * i;

// axis strip and date strip
rect(1792, 150, 81, 747, '#d6e1ef');
rect(8, 874, 1784, 23, '#d6e1ef');

// grid
const priceY = i => Math.round(190 + i * 27.3);
for (let i = 0; i < 14; i++) line(8, priceY(i), 1792, priceY(i), GRID, 1.5);
[601, 639, 677, 714, 762, 814, 865].forEach(y => line(8, y, 1792, y, GRID, 1.5));
const months = [[63, '10'], [271, '11'], [511, '12'], [739, '2023/01'], [957, '02'], [1174, '03'], [1415, '04']];
months.forEach(([x]) => { line(x, 150, x, 874, GRID, 1.5); line(x, 874, x, 897, '#999', 1.5); });

// volume by price
[[210, 835, 32], [277, 310, 33], [311, 392, 33], [345, 561, 33], [379, 1311, 33], [414, 1702, 32], [448, 779, 32], [481, 875, 33], [515, 288, 32]]
  .forEach(([y, x, h]) => rect(9, y, x - 9, h, '#00ffff'));
[413, 447, 481].forEach(y => line(9, y, 779, y, '#d4ffff', 2));

const parse = s => s.trim().split(/\s+/).map(p => p.split(',').map(Number));
const yOn = (pts, x) => {
  for (let i = 1; i < pts.length; i++) {
    const [x0, y0] = pts[i - 1], [x1, y1] = pts[i];
    if (x <= x1) return y0 + (y1 - y0) * Math.max(0, x - x0) / (x1 - x0);
  }
  return pts[pts.length - 1][1];
};
const poly = (pts, c, w) => add('polyline', { points: pts.map(p => p.join(',')).join(' '), stroke: c, 'stroke-width': w });

const spanA = parse(`15,491 24,487 61,486 80,468 91,467 101,447 127,447 156,437 177,427 188,420 220,420 232,426 264,429 276,435 297,442 318,453 329,456 362,458 373,462 428,462 440,458 449,452 461,453 493,454 504,458 516,458 526,453 558,448 580,447 636,443 646,439 668,437 689,437 700,441 711,437 744,437 754,439 809,439 820,434 842,434 853,450 864,450 875,455 907,458 929,467 940,467 951,482 962,496 984,497 995,502 1006,503 1027,503 1060,501 1071,498 1093,498 1103,494 1125,491 1136,500 1147,500 1158,496 1180,496 1191,491 1202,490 1212,484 1256,483 1278,471 1289,463 1300,448 1311,433 1322,430 1332,428 1364,418 1430,418 1446,416 1463,417 1474,396 1485,392 1507,390 1519,392 1536,394 1560,394 1572,401 1584,414 1595,415 1605,426 1617,417 1650,413 1672,412 1680,401 1692,384 1703,384 1714,381 1724,363 1735,303 1748,303`);
const spanB = parse(`15,520 59,520 68,515 80,506 91,506 101,489 297,489 308,481 340,478 352,467 373,462 406,461 428,452 439,452 449,443 560,442 636,442 678,445 733,445 748,449 776,450 782,453 846,453 909,455 919,459 940,461 951,462 962,474 995,476 1212,476 1223,481 1289,482 1300,473 1311,462 1358,462 1366,460 1464,460 1474,445 1485,441 1560,441 1572,434 1603,421 1617,419 1629,414 1682,414 1692,400 1714,400 1724,384 1735,327 1748,327`);

// cloud hatching between the two leading spans
for (let i = 0; i < 160; i++) {
  const x = Math.min(xAt(i), 1747), a = yOn(spanA, x), b = yOn(spanB, x);
  if (Math.abs(a - b) > 2) line(x, a, x, b, a < b ? '#f5a878' : '#7c98f2', 1.3);
}
poly(spanA, '#f9a268', 2);
poly(spanB, '#6f8df0', 2.4);

// chikou span
poly(parse(`15,437 24,431 36,434 47,434 57,426 80,442 91,422 101,409 133,419 156,458 167,465 177,455 188,437 199,432 209,441 220,442 232,437 243,419 253,423 264,433 276,442 286,433 300,438 308,485 319,485 329,499 340,491 352,496 362,496 373,509 394,517 406,517 417,544 428,535 440,533 449,545 461,540 472,530 482,502 493,496 504,504 526,485 537,486 558,477 581,481 592,487 602,484 613,491 624,488 636,481 646,463 657,469 668,461 678,461 700,450 722,450 733,427 744,431 754,400 777,403 787,425 798,425 809,399 820,399 831,411 842,396 853,417 875,425 885,421 896,409 907,417 918,385 929,366 940,371 951,385 962,424 973,440 984,434 995,450 1006,442 1017,442 1027,463 1060,442 1071,408 1082,424 1093,386 1114,381 1125,393 1136,370 1147,342 1158,372 1169,337 1180,302 1191,222 1202,207`), '#a020d8', 2);
// kijun, tenkan
poly(parse(`15,436 36,443 106,443 108,445 177,446 188,450 220,450 232,458 243,462 276,462 297,458 352,457 373,450 428,449 440,437 569,437 581,447 602,454 633,454 646,459 666,465 678,467 689,479 700,483 798,483 809,487 853,487 864,511 907,511 929,501 940,498 976,498 995,492 1006,487 1017,477 1027,463 1038,444 1060,441 1071,436 1093,433 1160,433 1180,428 1191,428 1202,408 1212,402 1242,396 1258,393 1289,394 1311,404 1408,404 1419,390 1442,390 1452,377 1463,323 1476,323`), '#7c7c7c', 4);
poly(parse(`15,443 24,446 37,452 47,462 57,470 86,470 101,480 122,480 131,479 156,479 167,476 177,459 220,459 245,453 253,442 278,442 286,438 318,438 335,432 362,431 373,428 384,426 396,423 417,423 428,433 440,438 502,440 516,444 527,440 567,438 581,452 592,453 602,460 625,461 646,468 668,473 678,507 689,514 711,514 722,520 744,525 766,520 787,520 798,514 820,509 842,497 864,490 875,489 885,483 907,483 929,475 940,470 962,470 984,468 995,459 1006,454 1017,446 1027,433 1038,421 1060,413 1082,411 1093,406 1148,405 1158,402 1180,402 1191,412 1202,387 1212,384 1234,384 1245,389 1267,394 1289,395 1300,402 1311,421 1322,428 1332,450 1343,433 1354,433 1365,428 1376,422 1398,422 1408,398 1419,378 1430,378 1442,370 1452,348 1458,310 1463,285 1476,285`), '#0f9a85', 4);
// Bollinger middle and upper
poly(parse(`15,420 47,429 80,444 102,452 135,463 157,471 225,472 245,468 276,459 297,455 318,452 352,442 384,436 412,433 469,433 504,435 531,434 580,435 613,447 646,457 668,462 700,476 722,485 744,496 766,503 787,510 798,512 842,509 862,507 896,503 929,492 952,483 984,475 1006,469 1027,463 1049,457 1071,449 1103,438 1125,429 1148,424 1172,419 1191,414 1212,406 1225,403 1234,403 1248,405 1267,409 1289,412 1311,417 1332,421 1354,422 1364,421 1380,417 1405,415 1421,413 1438,413 1444,410 1454,404 1462,395 1474,383`), '#d60be8', 4);
poly(parse(`15,374 24,371 37,365 49,368 67,372 80,377 92,381 112,392 133,408 144,415 167,437 188,437 200,436 220,436 243,431 264,423 286,417 308,413 329,410 340,412 362,418 373,417 384,412 406,409 428,409 440,407 486,407 504,408 526,406 571,406 581,404 601,402 613,402 623,404 636,404 646,402 668,397 695,399 722,404 733,412 744,422 764,441 777,453 787,468 797,473 809,473 829,467 853,463 875,458 896,456 915,453 924,450 940,450 962,453 973,448 995,443 1006,435 1017,431 1027,420 1038,408 1049,399 1060,396 1071,393 1082,388 1093,383 1114,379 1125,379 1148,382 1172,384 1191,386 1202,376 1212,369 1225,367 1234,368 1245,366 1282,364 1295,362 1323,362 1344,366 1365,363 1376,358 1398,353 1408,350 1419,342 1430,342 1442,336 1448,327 1452,317 1456,303 1463,275 1470,252 1474,240`), '#e60000', 4);

// candles: direction high,bodyTop,bodyBottom,low
const candles = `b468,469,483,488 r472,472,483,493 b471,471,499,503 r460,482,491,492 b478,488,497,500 r485,488,491,501 b466,476,501,502 r462,465,499,499 r455,469,471,475 b476,483,486,489 r480,481,487,496 b483,483,499,499 r475,482,483,486 r456,460,491,496 b446,450,457,468 r418,434,455,456 b430,436,451,452 r440,448,452,455 b436,437,445,452 b437,442,452,463 b440,448,461,463 r437,443,456,457 r429,439,443,447 b427,430,437,440 r420,424,435,436 b413,417,438,448 r425,430,447,451 b424,425,435,436 b429,431,433,438 r423,425,435,443 b425,426,434,436 b432,438,442,443 b417,419,422,433 r404,409,421,422 r404,412,413,418 b410,412,417,431 r413,419,421,423 b413,415,439,441 b437,439,460,462 b455,461,466,469 r452,455,460,466 r435,436,449,451 r425,431,436,440 b430,431,443,452 r438,441,445,452 r435,436,441,451 r417,419,429,430 b415,418,425,426 b419,420,434,437 b433,439,443,448 r426,433,446,447 r423,430,435,436 b423,425,484,489 b483,484,487,492 b483,488,500,504 r488,490,501,501 b482,494,495,497 r490,496,502,506 b496,499,510,514 b500,509,515,518 b508,511,518,518 b508,513,516,519 b523,525,544,544 r531,535,545,545 r526,533,537,537 b537,540,546,550 r538,540,546,549 r513,530,535,535 r501,504,518,526 r490,495,510,515 b491,492,507,507 r492,495,503,508 r478,483,487,487 b473,483,487,489 r476,480,483,484 b471,472,477,480 b473,476,481,485 b475,480,481,484 b477,480,488,489 r477,483,484,490 b487,488,493,496 r484,488,492,492 r475,480,481,484 r461,463,479,485 b454,455,469,474 r445,461,463,473 r458,460,463,468 r447,453,456,460 b443,448,451,457 b444,446,451,455 b433,448,451,455 r424,426,443,443 b420,420,432,435 r397,399,433,440 b375,393,403,407 r393,403,408,413 b403,405,426,442 b410,421,426,432 r398,399,416,417 r370,398,407,413 b396,396,412,423 r388,395,409,415 b385,404,417,419 b404,413,422,431 b413,420,426,430 r417,420,433,433 r404,408,417,420 b402,404,417,417 r384,384,413,413 r341,365,366,377 r333,369,371,379 b368,380,385,387 b382,384,425,429 b426,435,441,448 r431,433,447,447 b435,435,452,457 b433,438,442,448 b434,442,443,453 b435,437,463,468 r453,456,470,474 r442,449,455,455 b436,439,442,450 r392,408,445,449 b394,394,426,435 r382,386,422,423 r367,381,387,399 b375,380,381,391 b373,373,393,397 r344,371,393,394 r305,341,353,369 b323,346,372,377 r337,338,365,369 r277,302,333,340 r184,221,246,261 b179,206,207,230`.split(' ');
candles.forEach((c, i) => {
  const color = c[0] === 'r' ? RED : BLUE, x = xAt(i);
  const [hi, top, bot, lo] = c.slice(1).split(',').map(Number);
  line(x, hi, x, lo, color, 1.4);
  rect(x - 4.5, top, 9, Math.max(1.5, bot - top), color);
});

// lower panes
poly(parse(`15,732 21,730 37,732 48,729 56,732 67,729 80,732 92,729 110,732 122,730 135,732 153,728 165,727 178,722 190,724 208,720 231,724 251,719 276,715 285,718 309,719 331,715 352,718 363,714 374,709 404,713 441,722 468,717 484,718 517,713 545,717 569,714 581,723 603,729 614,727 640,730 655,734 667,736 677,734 690,738 710,733 723,737 741,733 753,728 765,726 778,728 798,724 808,726 830,723 842,725 888,727 906,724 919,720 930,723 940,719 960,718 995,717 1006,712 1017,714 1027,706 1040,713 1048,716 1062,725 1070,729 1082,724 1093,717 1104,720 1114,717 1137,724 1147,727 1169,720 1180,724 1190,717 1202,706 1212,713 1222,718 1245,733 1256,729 1267,733 1278,729 1289,733 1300,738 1311,734 1332,730 1344,716 1354,723 1364,712 1375,703 1387,703 1398,708 1408,696 1420,674 1431,684 1442,677 1452,655 1463,613 1474,593`), '#ff6a00', 3.5);
poly(parse(`15,728 80,729 150,730 178,728 208,724 250,723 276,720 320,718 352,717 374,715 404,714 430,715 455,718 510,717 569,716 600,720 640,725 680,731 710,733 753,733 800,729 850,726 906,725 940,723 960,722 1000,718 1027,714 1048,714 1082,720 1110,719 1147,722 1185,723 1202,718 1222,718 1256,723 1300,729 1332,731 1364,725 1375,720 1398,714 1408,710 1420,703 1442,695 1452,687 1474,658`), '#8c2090', 1.3);
poly(parse(`15,762 24,760 37,766 57,769 67,768 80,773 92,768 110,769 122,768 145,769 155,764 170,764 178,761 190,765 208,765 231,768 240,767 265,768 276,766 287,770 320,769 331,766 355,768 372,765 400,763 417,768 430,771 441,773 460,770 484,772 500,770 517,767 535,770 550,770 557,768 569,769 581,800 594,800 603,803 612,801 640,803 664,806 680,807 690,811 712,811 723,813 732,811 744,813 753,808 765,806 778,808 788,806 805,809 855,809 862,810 907,810 919,805 930,808 985,808 995,810 1006,806 1017,808 1027,790 1038,799 1050,799 1070,807 1082,800 1093,805 1104,807 1114,804 1125,811 1147,815 1169,811 1179,815 1191,799 1202,807 1213,823 1223,826 1235,843 1245,847 1256,844 1267,847 1289,847 1300,853 1311,850 1331,850 1344,829 1354,839 1366,816 1387,815 1398,820 1408,821 1420,833 1431,862 1452,838 1463,863 1474,871`), '#ff6a00', 4);

// pane borders
[150, 574, 743, 874, 896].forEach(y => line(8, y, 1873, y, '#999', 1.5));
line(1792, 150, 1792, 897, '#999', 2);
line(8.5, 150, 8.5, 897, '#999', 1);
line(1872, 150, 1872, 897, '#999', 1);

// axis labels
const tick = (y, label) => { line(1792, y, 1799, y, '#999', 1.5); add('text', { x: 1801, y: y + 4 }, label); };
for (let i = 0; i < 14; i++) {
  if (i !== 1) tick(priceY(i), (135 - i * 5) + ',000');
  line(1792, priceY(i) + 13.5, 1795, priceY(i) + 13.5, '#999');
}
[['47,500K', 600], ['45,000K', 638], ['42,500K', 676], ['40,000K', 713], ['120,000M', 761], ['110,000M', 814], ['100,000M', 865]].forEach(([t, y]) => tick(y, t));
for (let y = 585; y < 740; y += 7.6) line(1792, y, 1795, y, '#999');
for (let y = 751; y < 870; y += 10.4) line(1792, y, 1795, y, '#999');
add('text', { x: 1793, y: 164, style: 'fill:#e81a0c;font-size:15px' }, 'LC:90,48');
add('text', { x: 1793, y: 179, style: 'fill:#1558cc;font-size:15px' }, 'HC:-4,56');
rect(1797, 197, 73, 16, RED);
add('text', { x: 1801, y: 210, style: 'fill:#fff' }, '132,000');
add('text', { x: 1801, y: 225, style: 'fill:#e81a0c' }, '2,09%');
[578, 747].forEach(y => { rect(1860, y, 10, 10, '#444'); add('path', { d: `M1862 ${y + 2}l6 6m0 -6l-6 6`, stroke: '#ddd' }); });

months.forEach(([x, t]) => add('text', { x: x + 2, y: 889 }, t));
add('text', { x: 10, y: 889 }, '2022/09');
add('text', { x: 1801, y: 889 }, '04/10');

// annotations
add('ellipse', { cx: 1446, cy: 173, rx: 27, ry: 14, fill: '#1c5cbc', stroke: '#1010f0', 'stroke-width': 1.5 });
add('path', { d: 'M1440 177h14M1452 171l8 6-8 6zM1463 171v11', stroke: '#20a050', 'stroke-width': 1.5, fill: '#20a050' });
const high = add('text', { class: 'note', x: 1294, y: 181, style: 'fill:#f01010' }, '최고 138,300 (04/0');
add('tspan', { style: 'fill:#3c9a68' }, '7)', high);
rect(1415, 155, 7, 7, '#0000ff');
rect(1470, 184, 8, 7, '#0000ff');
add('text', { class: 'note', x: 673, y: 506, style: 'fill:#333' }, '배당락(0,00%)');
add('path', { d: 'M722 510v18M716 528h12l-6 7z', stroke: '#ff0000', fill: '#ff0000' });
add('text', { class: 'note', x: 560, y: 551, style: 'fill:#1414e0' }, '최저 69,300 (12/28)');
add('path', { d: 'M699 547h12M711 542l6 5-6 5z', stroke: '#0000ff', 'stroke-width': 2, fill: '#0000ff' });
[['전환선 9: 117,650', '#0f9a85'], ['기준선 26: 110,700', '#7c7c7c'], ['후행스팬 26: 132,000', '#a020d8'], ['선행스팬1 9,26: 114,175', '#f9a268'], ['선행스팬2 52,26: 109,800', '#6a8bf0']]
  .forEach(([t, c], i) => add('text', { class: 'big', x: 1786, y: 504 + i * 15, style: 'fill:' + c }, t));
```
